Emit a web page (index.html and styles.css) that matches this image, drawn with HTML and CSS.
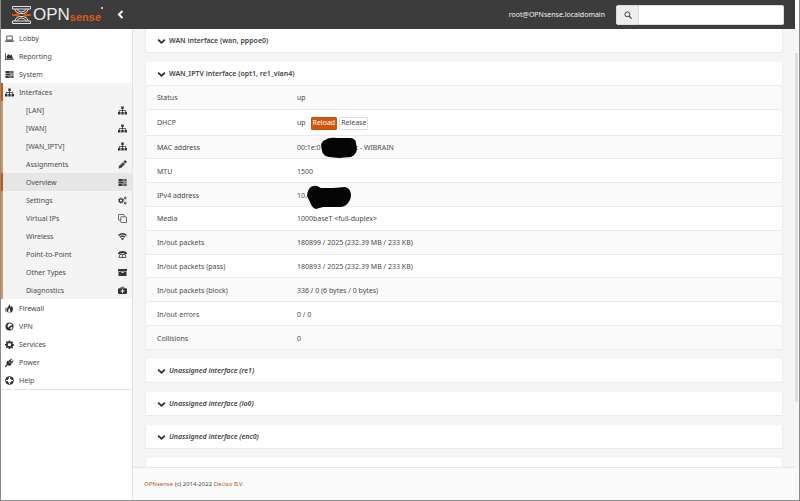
FILE: index.html
```html
<!DOCTYPE html>
<html lang="en">
<head>
<meta charset="utf-8">
<title>Interfaces: Overview | OPNsense</title>
<link rel="stylesheet" href="styles.css">
</head>
<body>
<svg class="sprite" aria-hidden="true">
  <symbol id="laptop" viewBox="0 0 18 18"><path d="M3.5 4h11v8h-11z" fill="none" stroke="currentColor" stroke-width="1.6"/><path d="M0 13h18v1.5L16.500 15.500h-15L0 14.500z"/></symbol>
  <symbol id="chart" viewBox="0 0 18 18"><path d="M0 2h1.500v12.500H18V16H0z"/><path d="M3 13.500V9l4-5 3 3 3-2 3.500 8.500z"/></symbol>
  <symbol id="server" viewBox="0 0 18 18"><path d="M1 2h16v4H1zM1 7h16v4H1zM1 12h16v4H1z"/><path d="M8 4h7M11 9h4M7 14h8" stroke="#fff" stroke-width="1.300"/></symbol>
  <symbol id="tree" viewBox="0 0 18 18"><path d="M6.500 1h5v5h-5zM0 12h5v5H0zM6.500 12h5v5h-5zM13 12h5v5h-5z"/><path d="M9 5v8M2.500 13V9h13v4" fill="none" stroke="currentColor" stroke-width="1.600"/></symbol>
  <symbol id="pencil" viewBox="0 0 18 18"><path d="M1 17l1-5L10 4l4 4-8 8zM11 3l2-2q1-1 2 0l2 2q1 1 0 2l-2 2z"/><path d="M2.500 13.500l2 2M5 11.500l6-6" stroke="#fff" stroke-width=".8"/></symbol>
  <symbol id="cog" viewBox="0 0 18 18"><path fill-rule="evenodd" d="M7.500 1h3l.5 2.500 1.300.6L14.500 2.600l1.900 2-1.500 2.100.6 1.300 2.500.4v2.900l-2.500.5-.6 1.300 1.500 2.100-2 2-2.100-1.500-1.300.6L10.500 18h-3L7 15.800l-1.300-.6-2.200 1.500-1.900-2 1.500-2.100-.6-1.300L0 10.800V8l2.500-.4.6-1.300L1.600 4.200l2-2L5.700 3.700 7 3.200zM9 6a3.300 3.300 0 1 0 0 6.600A3.300 3.300 0 0 0 9 6z"/></symbol>
  <symbol id="cogs" viewBox="0 0 18 18"><circle cx="6" cy="9" r="3.500" fill="none" stroke="currentColor" stroke-width="2.500"/><circle cx="6" cy="9" r="5.300" fill="none" stroke="currentColor" stroke-width="1.500" stroke-dasharray="2.200 2"/><circle cx="14.500" cy="4" r="2" fill="none" stroke="currentColor" stroke-width="1.800"/><circle cx="14.500" cy="14" r="2" fill="none" stroke="currentColor" stroke-width="1.800"/></symbol>
  <symbol id="clone" viewBox="0 0 18 18"><g fill="none" stroke="currentColor" stroke-width="1.400"><rect x="5.500" y="5.500" width="11.500" height="11.500" rx="1"/><path d="M5 12.500H2q-1 0-1-1V2q0-1 1-1h9.500q1 0 1 1v3"/></g></symbol>
  <symbol id="wifi" viewBox="0 0 18 18"><g fill="none" stroke="currentColor" stroke-width="2.500"><path d="M1 7q8-7 16 0M3.800 10.500q5.200-4.500 10.400 0"/></g><path d="M9 16.500L5.500 13q3.500-2.500 7 0z"/></symbol>
  <symbol id="phone" viewBox="0 0 18 18"><path d="M0 8V6q2-4 9-4t9 4v2h-5V6.500H5V8z"/><path d="M3.500 9h11l1.500 6H2z" fill="none" stroke="currentColor" stroke-width="1.600"/><circle cx="9" cy="12" r="1.500"/></symbol>
  <symbol id="archive" viewBox="0 0 18 18"><path d="M0 2h18v4H0z"/><path fill-rule="evenodd" d="M1 7h16v9H1zM6.500 8.500V10h5V8.500z"/></symbol>
  <symbol id="medkit" viewBox="0 0 18 18"><path d="M6 5V2.500h6V5" fill="none" stroke="currentColor" stroke-width="1.600"/><path fill-rule="evenodd" d="M2 4.500h14q2 0 2 2V14q0 2-2 2H2q-2 0-2-2V6.500q0-2 2-2zM8 6.500v2.700H5.300v2H8V14h2v-2.800h2.700v-2H10V6.500z"/></symbol>
  <symbol id="fire" viewBox="0 0 18 18"><path d="M8 0q4 3 3 7 2-1 1.500-3.500Q17 7 16 11q-1 6-7 7 3-3 1-6-1-2 0-4-3 1-3.500 4-.5 2 1 6-5-2-5-6 0-3 3-5.500Q8.500 4 8 0zM3 6q-3 4-1.500 8L3 17Q0 15 0 11t3-5z"/></symbol>
  <symbol id="globe" viewBox="0 0 18 18"><circle cx="9" cy="9" r="8"/><path d="M9.500 2.500L14 4l-1 3-3 1-3 3-2-2 1-4zM12 10l3.500 1-2.500 4-3-2z" fill="#fff"/></symbol>
  <symbol id="plug" viewBox="0 0 18 18"><path d="M5 5l8 8q-4 4-8 1.500L2 18H0v-2l3-3Q2 8 5 5z"/><path d="M7.500 7.500l5-5M11 11l5-5" stroke="currentColor" stroke-width="2.200" stroke-linecap="round"/><path d="M7 5l6 6 1-3-4-4z"/></symbol>
  <symbol id="help" viewBox="0 0 18 18"><circle cx="9" cy="9" r="6" fill="none" stroke="currentColor" stroke-width="4"/><g fill="none" stroke="#fff" stroke-width="2.400"><path d="M9 2v4M9 12v4M2 9h4M12 9h4"/></g><circle cx="9" cy="9" r="8" fill="none" stroke="currentColor" stroke-width="1.200"/></symbol>
  <symbol id="down" viewBox="0 0 18 18"><path d="M1 6.500L3.500 4 9 9l5.500-5L17 6.500 9 14z"/></symbol>
</svg>

<div class="window">
  <header class="topbar">
    <a class="brand" href="#" aria-label="OPNsense">
      <svg class="mark" viewBox="0 0 38 36" aria-hidden="true"><g fill="none" stroke="#e4e4e4" stroke-width="2"><path d="M1 1h36v5H1zM1 30h36v5H1zM5 6q3 8 10 9h8q7-1 10-9M5 30q3-8 10-9h8q7 1 10 9M9 6q5 6 10 6t10-6M9 30q5-6 10-6t10 6"/></g><path d="M0 16h9v-4l7 6-7 6v-4H0zM38 16h-9v-4l-7 6 7 6v-4h9z" fill="#d9560f"/></svg>
      <span class="opn">OPN</span><span class="sense">sense</span><span class="dot"></span>
    </a>
    <button class="toggle" type="button" aria-label="Toggle sidebar"><svg viewBox="0 0 10 14"><path d="M8 1.500L2.500 7 8 12.500" fill="none" stroke="#fff" stroke-width="3"/></svg></button>
    <span class="user">root@OPNsense.localdomain</span>
    <form class="search">
      <button type="button" aria-label="Search"><svg viewBox="0 0 18 18"><circle cx="7.500" cy="7.500" r="5.500" fill="none" stroke="#333" stroke-width="2"/><path d="M11.500 11.500L17 17" stroke="#333" stroke-width="2.500"/></svg></button>
      <input type="text" aria-label="Search">
    </form>
  </header>

  <div class="body">
    <nav class="sidebar">
      <a href="#"><svg><use href="#laptop"/></svg>Lobby</a>
      <a href="#"><svg><use href="#chart"/></svg>Reporting</a>
      <a href="#"><svg><use href="#server"/></svg>System</a>
      <a href="#" class="current"><svg><use href="#tree"/></svg>Interfaces</a>
      <div class="sub">
        <a href="#">[LAN]<svg><use href="#tree"/></svg></a>
        <a href="#">[WAN]<svg><use href="#tree"/></svg></a>
        <a href="#">[WAN_IPTV]<svg><use href="#tree"/></svg></a>
        <a href="#">Assignments<svg><use href="#pencil"/></svg></a>
        <a href="#" class="selected">Overview<svg><use href="#server"/></svg></a>
        <a href="#">Settings<svg><use href="#cogs"/></svg></a>
        <a href="#">Virtual IPs<svg><use href="#clone"/></svg></a>
        <a href="#">Wireless<svg><use href="#wifi"/></svg></a>
        <a href="#">Point-to-Point<svg><use href="#phone"/></svg></a>
        <a href="#">Other Types<svg><use href="#archive"/></svg></a>
        <a href="#">Diagnostics<svg><use href="#medkit"/></svg></a>
      </div>
      <a href="#"><svg><use href="#fire"/></svg>Firewall</a>
      <a href="#"><svg><use href="#globe"/></svg>VPN</a>
      <a href="#"><svg><use href="#cog"/></svg>Services</a>
      <a href="#"><svg><use href="#plug"/></svg>Power</a>
      <a href="#"><svg><use href="#help"/></svg>Help</a>
    </nav>

    <div class="page">
      <main class="content">
        <section class="card"><h2><svg><use href="#down"/></svg>WAN interface (wan, pppoe0)</h2></section>
        <section class="card">
          <h2><svg><use href="#down"/></svg>WAN_IPTV interface (opt1, re1_vlan4)</h2>
          <table>
            <tr><th scope="row">Status</th><td>up</td></tr>
            <tr><th scope="row">DHCP</th><td><div class="dhcp"><span>up</span><button class="primary" type="button">Reload</button><button type="button">Release</button></div></td></tr>
            <tr><th scope="row">MAC address</th><td>00:1e:0<span class="mask mac"><svg viewBox="0 0 36 22"><path d="M4 3Q8 0 16 1l14 0q5 1 5 5l1 6q-1 6-6 8l-12 1-10-1Q2 19 1 14L0 8q1-4 4-5z"/></svg></span>c - WIBRAIN</td></tr>
            <tr><th scope="row">MTU</th><td>1500</td></tr>
            <tr><th scope="row">IPv4 address</th><td>10.<span class="mask ip"><svg viewBox="0 0 44 24"><path d="M2 4Q5 0 10 1l4 2 12 0 12-1q5 1 6 7 0 6-3 9-3 4-8 4l-17 0-7 2Q5 23 3 17L0 11q0-4 2-7z"/></svg></span></td></tr>
            <tr><th scope="row">Media</th><td>1000baseT &lt;full-duplex&gt;</td></tr>
            <tr><th scope="row">In/out packets</th><td>180899 / 2025 (232.39 MB / 233 KB)</td></tr>
            <tr><th scope="row">In/out packets (pass)</th><td>180893 / 2025 (232.39 MB / 233 KB)</td></tr>
            <tr><th scope="row">In/out packets (block)</th><td>336 / 0 (6 bytes / 0 bytes)</td></tr>
            <tr><th scope="row">In/out errors</th><td>0 / 0</td></tr>
            <tr><th scope="row">Collisions</th><td>0</td></tr>
          </table>
        </section>
        <section class="card"><h2 class="unassigned"><svg><use href="#down"/></svg>Unassigned interface (re1)</h2></section>
        <section class="card"><h2 class="unassigned"><svg><use href="#down"/></svg>Unassigned interface (lo0)</h2></section>
        <section class="card"><h2 class="unassigned"><svg><use href="#down"/></svg>Unassigned interface (enc0)</h2></section>
        <section class="card"><h2><svg><use href="#down"/></svg></h2></section>
      </main>
      <footer><a href="#">OPNsense</a> (c) 2014-2022 <a href="#">Deciso B.V.</a></footer>
    </div>
    <div class="track"><div class="thumb"></div></div>
  </div>
</div>
</body>
</html>
```
FILE: styles.css
```css
* { box-sizing: border-box; }
body {
  margin: 0;
  font: 7px/10px "Noto Sans", "Open Sans", sans-serif;
  color: #4a4a4a;
  background: #fff;
}
a { color: inherit; text-decoration: none; }
button, input { font: inherit; color: inherit; margin: 0; }
svg { fill: currentColor; flex: none; }
.sprite { position: absolute; width: 0; height: 0; }

.window {
  height: 100vh;
  display: flex;
  flex-direction: column;
  overflow: hidden;
  border: solid #8b8b8b;
  border-width: 0 1px 1px;
}

.topbar {
  display: flex;
  align-items: center;
  flex: none;
  height: 29px;
  margin-right: 4px;
  padding: 0 11px;
  background: #3c3c3c;
}
.brand { display: flex; align-items: center; color: #ececec; }
.mark { width: 19px; height: 18px; margin-right: 2px; }
.opn { font: 17px/20px "Liberation Sans", sans-serif; }
.sense { align-self: flex-end; color: #dc5a12; font: bold 11px/16px "Liberation Sans", sans-serif; }
.dot { align-self: flex-start; width: 2px; height: 2px; margin-top: 2px; border-radius: 50%; background: #ececec; }
.toggle { display: flex; margin-left: 12px; padding: 2px; border: 0; background: none; }
.toggle svg { width: 7px; height: 9px; }
.user { margin-left: auto; color: #f4f4f4; }
.search { display: flex; width: 168px; height: 20px; margin-left: 11px; }
.search button {
  display: grid;
  place-items: center;
  width: 23px;
  padding: 0;
  border: 1px solid #ddd;
  border-radius: 2px 0 0 2px;
  background: #eee;
}
.search button svg { width: 8px; height: 8px; }
.search input { flex: 1; min-width: 0; border: 1px solid #ddd; border-left: 0; border-radius: 0 2px 2px 0; background: #fff; }

.body { display: flex; flex: 1; min-height: 0; }
.sidebar { flex: none; width: 132px; border-right: 1px solid #e3e3e3; background: #fff; }
.sidebar a { display: flex; align-items: center; height: 18px; padding: 1px 0 0 4px; }
.sidebar svg { width: 9px; height: 9px; margin-right: 5px; color: #333; }
.sidebar a.current { padding-left: 2px; border-left: 2px solid #c9540f; background: #f4f4f4; }
.sidebar > a:last-child { height: 19px; border-bottom: 1px solid #e3e3e3; }
.sub { background: #f4f4f4; }
.sidebar .sub a { justify-content: space-between; padding-left: 23px; border-left: 2px solid #d39a68; }
.sidebar .sub a.selected { border-left-color: #c9540f; background: #e6e6e6; }

.page { display: flex; flex-direction: column; flex: 1; min-width: 0; background: #f5f5f5; }
.content { flex: 1; min-height: 0; overflow: hidden; padding: 0 12px; }
.card { margin-bottom: 9px; border: solid #ececec; border-width: 0 1px 1px; background: #fff; }
.card h2 { display: flex; align-items: center; height: 23px; margin: 0; padding: 1px 0 0 11px; font-size: 7px; font-weight: 600; color: #444; }
.card h2 svg { width: 9px; height: 9px; margin-right: 3px; color: #333; }
.card h2.unassigned { font-style: italic; }
table { width: 100%; height: 264px; border-spacing: 0; }
th, td { padding: 2px 0 0 11px; border-top: 1px solid #e9e9e9; font-weight: 400; text-align: left; }
th { width: 22%; }
tr { height: 23px; }
tr:nth-child(odd) { background: #fafafa; }
.dhcp { display: flex; align-items: center; height: 22px; }
.dhcp button { height: 13px; padding: 0 1px; border: 1px solid #e0e0e0; border-radius: 1px; background: #fff; }
.dhcp span { margin-right: 5px; }
.dhcp .primary { margin-right: 2px; border-color: #c9510b; background: #d2560e; color: #fff; }
.mask { position: relative; display: inline-block; height: 5px; }
.mask svg { position: absolute; left: 0; top: -8px; fill: #050505; }
.mac { width: 34px; }
.mac svg { width: 36px; height: 22px; }
.ip { width: 44px; }
.ip svg { width: 44px; height: 24px; }

footer { flex: none; height: 33px; padding: 11px; border-top: 1px solid #e6e6e6; background: #fafafa; font-size: 6px; }
footer a { color: #b5602b; }

.track { flex: none; width: 4px; padding-top: 24px; background: #f7f7f7; }
.thumb { width: 3px; height: 78%; background: #dedede; }
```
